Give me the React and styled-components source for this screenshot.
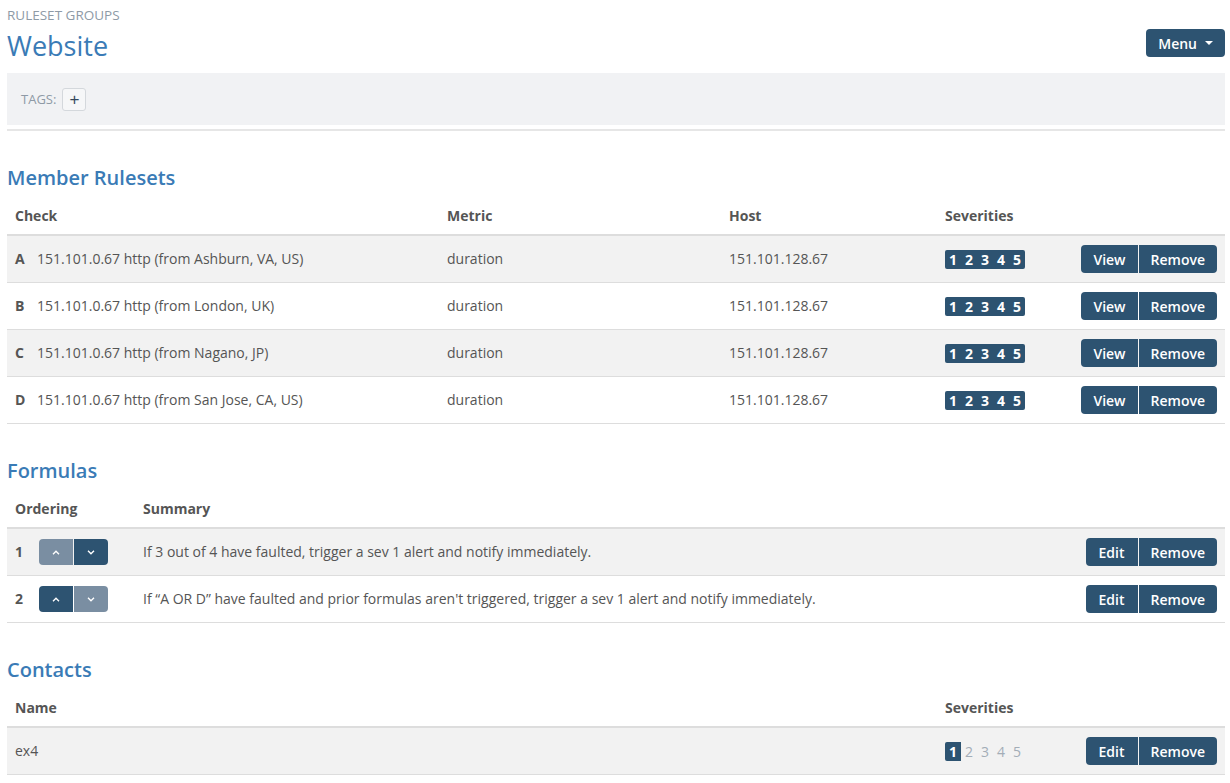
import styled, { createGlobalStyle } from "styled-components";

const GlobalStyle = createGlobalStyle`
  body {
    margin: 0;
    font-family: "Open Sans", "Liberation Sans", sans-serif;
    font-size: 14px;
    color: #555;
    background: #fff;
  }
`;

const Page = styled.div`
  padding: 7px 5px 20px 7px;
`;

const Top = styled.div`
  display: flex;
  justify-content: space-between;
  align-items: flex-end;
`;

const Crumb = styled.div`
  font-size: 13.5px;
  line-height: 16px;
  color: #8e9aa6;
  text-transform: uppercase;
`;

const Title = styled.h1`
  margin: 6px 0 0;
  font-size: 27px;
  line-height: 34px;
  font-weight: 400;
  color: #3a7bb6;
`;

const DarkButton = styled.button`
  background: #2d5371;
  color: #fff;
  border: 0;
  font-family: inherit;
  font-size: 14px;
  font-weight: 600;
  height: 28px;
  padding: 0 ${(p) => p.$pad || 12}px;
  cursor: pointer;
`;

const MenuButton = styled(DarkButton)`
  border-radius: 4px;
  margin-bottom: 6px;
  display: flex;
  align-items: center;
  gap: 8px;
  &::after {
    content: "";
    border-left: 4px solid transparent;
    border-right: 4px solid transparent;
    border-top: 4px solid #fff;
  }
`;

const TagBar = styled.div`
  margin-top: 10px;
  background: #f1f2f4;
  height: 52px;
  display: flex;
  align-items: center;
  padding: 0 14px;
  gap: 6px;
  font-size: 13px;
  color: #8e9aa6;
`;

const TagAdd = styled.button`
  width: 24px;
  height: 23px;
  border: 1px solid #d4d8dc;
  border-radius: 3px;
  background: #f6f7f8;
  color: #33485c;
  font-size: 17px;
  line-height: 1;
  padding: 0;
`;

const Rule = styled.div`
  height: 2px;
  background: #e6e6e6;
  margin-top: 4px;
`;

const Section = styled.section`
  margin-top: ${(p) => p.$top || 35}px;
`;

const Heading = styled.h2`
  margin: 0 0 8px;
  font-size: 20px;
  line-height: 24px;
  font-weight: 600;
  color: #3a7bb6;
`;

const Table = styled.table`
  width: 100%;
  border-collapse: collapse;
  table-layout: fixed;
`;

const Th = styled.th`
  box-sizing: border-box;
  text-align: left;
  font-weight: 700;
  color: #555;
  padding: 8px;
  line-height: 20px;
  border-bottom: 2px solid #dddddd;
  width: ${(p) => (p.$w ? p.$w + "px" : "auto")};
`;

const Tr = styled.tr`
  background: ${(p) => (p.$odd ? "#f2f2f2" : "#fff")};
  border-bottom: 1px solid #dddddd;
`;

const Td = styled.td`
  padding: 9px 8px;
  height: 28px;
  line-height: 20px;
  vertical-align: middle;
  white-space: nowrap;
  text-align: ${(p) => (p.$right ? "right" : "left")};
`;

const Key = styled.b`
  display: inline-block;
  width: 22px;
  font-weight: 700;
`;

const Sev = styled.span`
  display: inline-flex;
  border-radius: 2px;
  overflow: hidden;
  vertical-align: middle;
`;

const SevNum = styled.span`
  width: 16px;
  height: 19px;
  line-height: 19px;
  text-align: center;
  font-size: 14px;
  font-weight: ${(p) => (p.$on ? 700 : 400)};
  background: ${(p) => (p.$on ? "#2d5371" : "transparent")};
  color: ${(p) => (p.$on ? "#fff" : "#a3adb7")};
`;

const Group = styled.div`
  display: inline-flex;
  gap: 1px;
  border-radius: 4px;
  overflow: hidden;
  vertical-align: middle;
`;

const ArrowButton = styled.button`
  width: 34px;
  height: 26px;
  border: 0;
  padding: 0;
  background: ${(p) => (p.$muted ? "#7a8ea2" : "#2d5371")};
  color: #fff;
  display: flex;
  align-items: center;
  justify-content: center;
`;

const OrderCell = styled.div`
  display: flex;
  align-items: center;
  gap: 16px;
`;

function Severities({ on }) {
  return (
    <Sev>
      {[1, 2, 3, 4, 5].map((n) => (
        <SevNum key={n} $on={on.includes(n)}>
          {n}
        </SevNum>
      ))}
    </Sev>
  );
}

function Actions({ first }) {
  return (
    <Group>
      <DarkButton $pad={first === "Edit" ? 13 : 12}>{first}</DarkButton>
      <DarkButton>Remove</DarkButton>
    </Group>
  );
}

function Chevron({ up }) {
  return (
    <svg width="8" height="5" viewBox="0 0 8 5" fill="none" stroke="#fff" strokeWidth="1.4">
      <path d={up ? "M1 4.3L4 1.3L7 4.3" : "M1 0.7L4 3.7L7 0.7"} />
    </svg>
  );
}

const rulesets = [
  ["A", "151.101.0.67 http (from Ashburn, VA, US)"],
  ["B", "151.101.0.67 http (from London, UK)"],
  ["C", "151.101.0.67 http (from Nagano, JP)"],
  ["D", "151.101.0.67 http (from San Jose, CA, US)"],
];

const formulas = [
  "If 3 out of 4 have faulted, trigger a sev 1 alert and notify immediately.",
  "If \u201cA OR D\u201d have faulted and prior formulas aren't triggered, trigger a sev 1 alert and notify immediately.",
];

export default function App() {
  return (
    <Page>
      <GlobalStyle />
      <Top>
        <div>
          <Crumb>Ruleset Groups</Crumb>
          <Title>Website</Title>
        </div>
        <MenuButton>Menu</MenuButton>
      </Top>
      <TagBar>
        TAGS: <TagAdd>+</TagAdd>
      </TagBar>
      <Rule />

      <Section $top={35}>
        <Heading>Member Rulesets</Heading>
        <Table>
          <thead>
            <tr>
              <Th $w={432}>Check</Th>
              <Th $w={282}>Metric</Th>
              <Th $w={216}>Host</Th>
              <Th $w={134}>Severities</Th>
              <Th />
            </tr>
          </thead>
          <tbody>
            {rulesets.map(([k, name], i) => (
              <Tr key={k} $odd={i % 2 === 0}>
                <Td>
                  <Key>{k}</Key>
                  {name}
                </Td>
                <Td>duration</Td>
                <Td>151.101.128.67</Td>
                <Td>
                  <Severities on={[1, 2, 3, 4, 5]} />
                </Td>
                <Td $right>
                  <Actions first="View" />
                </Td>
              </Tr>
            ))}
          </tbody>
        </Table>
      </Section>

      <Section>
        <Heading>Formulas</Heading>
        <Table>
          <thead>
            <tr>
              <Th $w={128}>Ordering</Th>
              <Th>Summary</Th>
              <Th $w={154} />
            </tr>
          </thead>
          <tbody>
            {formulas.map((f, i) => (
              <Tr key={i} $odd={i % 2 === 0}>
                <Td>
                  <OrderCell>
                    <b>{i + 1}</b>
                    <Group>
                      <ArrowButton $muted={i === 0}>
                        <Chevron up />
                      </ArrowButton>
                      <ArrowButton $muted={i === 1}>
                        <Chevron />
                      </ArrowButton>
                    </Group>
                  </OrderCell>
                </Td>
                <Td>{f}</Td>
                <Td $right>
                  <Actions first="Edit" />
                </Td>
              </Tr>
            ))}
          </tbody>
        </Table>
      </Section>

      <Section>
        <Heading>Contacts</Heading>
        <Table>
          <thead>
            <tr>
              <Th $w={930}>Name</Th>
              <Th $w={134}>Severities</Th>
              <Th />
            </tr>
          </thead>
          <tbody>
            <Tr $odd>
              <Td>ex4</Td>
              <Td>
                <Severities on={[1]} />
              </Td>
              <Td $right>
                <Actions first="Edit" />
              </Td>
            </Tr>
          </tbody>
        </Table>
      </Section>
    </Page>
  );
}
